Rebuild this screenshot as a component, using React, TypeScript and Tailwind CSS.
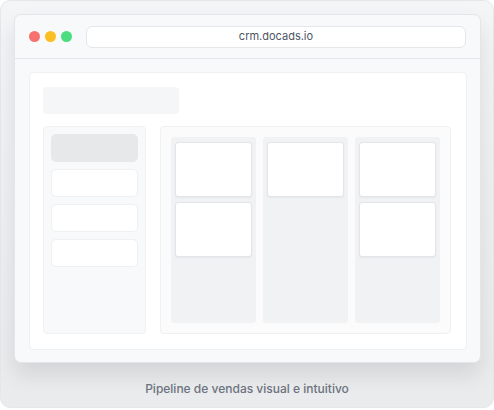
export default function App() {
  const cols = [2, 1, 2];
  return (
    <div className="w-[494px] h-[410px] bg-white" style={{ fontFamily: 'Inter, "Liberation Sans", sans-serif' }}>
      <div className="w-[494px] h-[408px] rounded-[10px] border border-[#e6e7e9] bg-gradient-to-b from-[#f4f5f6] to-[#eaebec] pt-[13px] px-[13px] flex flex-col">
        <div className="w-[467px] h-[349px] rounded-[7px] border border-[#e3e5e8] bg-[#f8f9fa] shadow-[0_12px_22px_rgba(0,0,0,0.10)] flex flex-col">
          <div className="h-[44px] border-b border-[#e5e7eb] flex items-center pl-[14px] pr-[14px] gap-[14px]">
            <div className="flex gap-[5px]">
              <div className="w-[11px] h-[11px] rounded-full bg-[#f87171]" />
              <div className="w-[11px] h-[11px] rounded-full bg-[#fbbf24]" />
              <div className="w-[11px] h-[11px] rounded-full bg-[#4ade80]" />
            </div>
            <div className="flex-1 h-[22px] rounded-[6px] bg-white border border-[#e5e7eb] flex items-center justify-center text-[11px] text-[#4b5563]">
              crm.docads.io
            </div>
          </div>
          <div className="flex-1 pt-[13px] pb-[12px] pl-[14px] pr-[13px] flex">
            <div className="flex-1 bg-white rounded-[4px] border border-[#eef0f2] pt-[14px] px-[13px] flex flex-col">
              <div className="w-[136px] h-[27px] rounded-[4px] bg-[#f5f6f7]" />
              <div className="flex gap-[14px] mt-[12px]">
                <div className="w-[103px] h-[208px] rounded-[4px] bg-[#f8f9fa] border border-[#f0f1f3] p-[7px] flex flex-col gap-[7px]">
                  <div className="h-[28px] rounded-[5px] bg-[#e7e8e9]" />
                  <div className="h-[28px] rounded-[5px] bg-white border border-[#eef0f2]" />
                  <div className="h-[28px] rounded-[5px] bg-white border border-[#eef0f2]" />
                  <div className="h-[28px] rounded-[5px] bg-white border border-[#eef0f2]" />
                </div>
                <div className="w-[291px] h-[208px] rounded-[4px] bg-[#fbfbfc] border border-[#f0f1f3] p-[10px] flex gap-[7px]">
                  {cols.map((n, i) => (
                    <div key={i} className="w-[85px] rounded-[3px] bg-[#f1f2f4] pt-[5px] pl-[4px] pr-[4px] flex flex-col gap-[5px]">
                      {Array.from({ length: n }).map((_, j) => (
                        <div key={j} className="h-[55px] rounded-[3px] bg-white border border-[#e3e5e8] shadow-[0_1px_2px_rgba(0,0,0,0.05)]" />
                      ))}
                    </div>
                  ))}
                </div>
              </div>
            </div>
          </div>
        </div>
        <div className="mt-[17px] text-center text-[12px] font-medium text-[#6b7280]">
          Pipeline de vendas visual e intuitivo
        </div>
      </div>
    </div>
  );
}
